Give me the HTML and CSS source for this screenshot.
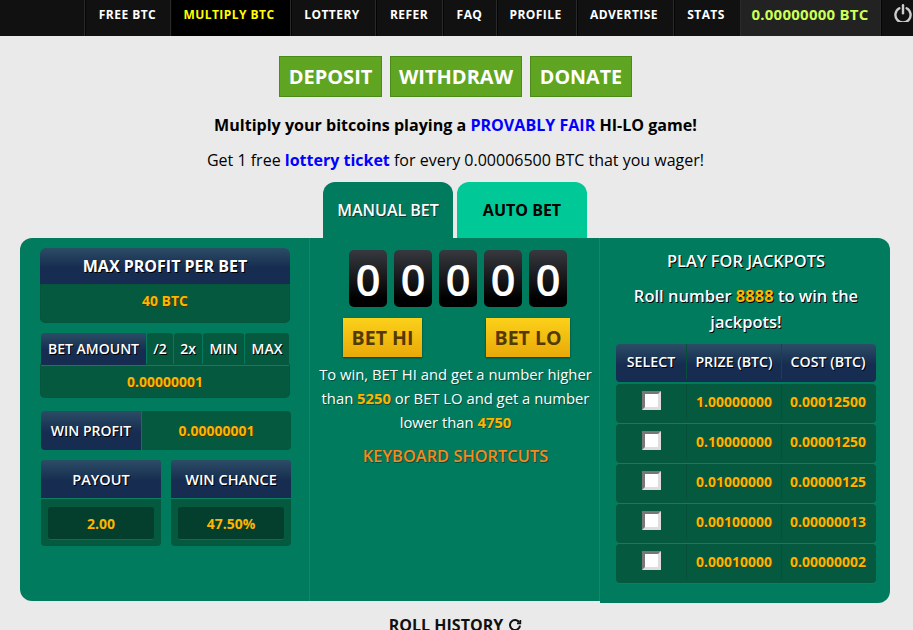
FILE: index.html
```html
<!DOCTYPE html>
<html lang="en">
<head>
<meta charset="utf-8">
<title>Multiply BTC</title>
<link rel="stylesheet" href="styles.css">
</head>
<body>
<nav class="topbar">
  <a class="nav-item nav-free">FREE BTC</a>
  <a class="nav-item nav-active nav-multiply">MULTIPLY BTC</a>
  <a class="nav-item nav-lottery">LOTTERY</a>
  <a class="nav-item nav-refer">REFER</a>
  <a class="nav-item nav-faq">FAQ</a>
  <a class="nav-item nav-profile">PROFILE</a>
  <a class="nav-item nav-advertise">ADVERTISE</a>
  <a class="nav-item nav-stats">STATS</a>
  <div class="nav-balance">0.00000000 BTC</div>
  <a class="nav-power">
    <svg width="18" height="18" viewBox="0 0 18 18" fill="none" stroke="#ccc" stroke-width="2.4" stroke-linecap="round"><path d="M5.4 4.2a7.6 7.6 0 1 0 7.2 0"/><path d="M9 1.2v8"/></svg>
  </a>
</nav>

<div class="actions">
  <a class="action-btn btn-deposit">DEPOSIT</a>
  <a class="action-btn btn-withdraw">WITHDRAW</a>
  <a class="action-btn btn-donate">DONATE</a>
</div>

<p class="intro intro-bold">Multiply your bitcoins playing a <a class="link">PROVABLY FAIR</a> HI-LO game!</p>
<p class="intro intro-second">Get 1 free <a class="link link-bold">lottery ticket</a> for every 0.00006500 BTC that you wager!</p>

<div class="tabs">
  <a class="tab tab-manual">MANUAL BET</a>
  <a class="tab tab-auto">AUTO BET</a>
</div>

<main class="game">
  <section class="col col-left">
    <div class="head head-max">MAX PROFIT PER BET</div>
    <div class="cell cell-max">40 BTC</div>

    <div class="bet-row">
      <div class="head-small bet-label">BET AMOUNT</div>
      <a class="bet-op op-half">/2</a>
      <a class="bet-op op-double">2x</a>
      <a class="bet-op op-min">MIN</a>
      <a class="bet-op op-max">MAX</a>
    </div>
    <div class="cell cell-bet">0.00000001</div>

    <div class="win-row">
      <div class="head-small win-label">WIN PROFIT</div>
      <div class="win-value">0.00000001</div>
    </div>

    <div class="stat-row">
      <div class="stat">
        <div class="stat-head">PAYOUT</div>
        <div class="stat-body"><div class="stat-value">2.00</div></div>
      </div>
      <div class="stat">
        <div class="stat-head">WIN CHANCE</div>
        <div class="stat-body"><div class="stat-value">47.50%</div></div>
      </div>
    </div>
  </section>

  <section class="col col-mid">
    <div class="digits">
      <span class="digit">0</span><span class="digit">0</span><span class="digit">0</span><span class="digit">0</span><span class="digit">0</span>
    </div>
    <div class="bet-btns">
      <a class="bet-btn bet-hi">BET HI</a>
      <a class="bet-btn bet-lo">BET LO</a>
    </div>
    <p class="rules">To win, BET HI and get a number higher than <b class="gold">5250</b> or BET LO and get a number lower than <b class="gold">4750</b></p>
    <a class="shortcuts">KEYBOARD SHORTCUTS</a>
  </section>

  <section class="col col-right">
    <h2 class="jack-title">PLAY FOR JACKPOTS</h2>
    <p class="jack-text">Roll number <span class="gold">8888</span> to win the jackpots!</p>
    <div class="jack-table">
      <div class="jack-row jack-head"><div class="jc">SELECT</div><div class="jc">PRIZE (BTC)</div><div class="jc">COST (BTC)</div></div>
      <div class="jack-row jack-body"><div class="jc"><input class="check" type="checkbox"></div><div class="jc">1.00000000</div><div class="jc">0.00012500</div></div>
      <div class="jack-row jack-body"><div class="jc"><input class="check" type="checkbox"></div><div class="jc">0.10000000</div><div class="jc">0.00001250</div></div>
      <div class="jack-row jack-body"><div class="jc"><input class="check" type="checkbox"></div><div class="jc">0.01000000</div><div class="jc">0.00000125</div></div>
      <div class="jack-row jack-body"><div class="jc"><input class="check" type="checkbox"></div><div class="jc">0.00100000</div><div class="jc">0.00000013</div></div>
      <div class="jack-row jack-body"><div class="jc"><input class="check" type="checkbox"></div><div class="jc">0.00010000</div><div class="jc">0.00000002</div></div>
    </div>
  </section>
</main>

<div class="history">ROLL HISTORY
  <svg class="history-icon" width="14" height="14" viewBox="0 0 14 14" fill="none" stroke="#111" stroke-width="2"><path d="M11.4 4.6A5 5 0 1 0 12 7.6"/><path d="M12.4 2v3.4H9" stroke-width="1.6"/></svg>
</div>
</body>
</html>
```
FILE: styles.css
```css
* { box-sizing: border-box; }
html, body { margin: 0; padding: 0; height: 630px; overflow: hidden; }
body { background: #eaeaea; color: #000; font-family: "Open Sans", "Liberation Sans", sans-serif; font-size: 16px; }
p, h2 { margin: 0; }

.topbar { display: flex; justify-content: flex-end; height: 36px; background: #111; }
.nav-item { display: flex; align-items: center; justify-content: center; height: 36px; padding-bottom: 7px; border-left: 1px solid #2a2a2a; box-shadow: inset 1px 0 0 #050505; color: #fff; font-size: 12px; font-weight: 700; letter-spacing: .45px; }
.nav-free { width: 86px; }
.nav-multiply { width: 120px; padding-right: 3px; }
.nav-lottery { width: 85px; padding-right: 2px; }
.nav-refer { width: 67px; }
.nav-faq { width: 54px; }
.nav-profile { width: 80px; padding-right: 2px; }
.nav-advertise { width: 97px; padding-right: 2px; }
.nav-stats { width: 67px; padding-right: 2px; }
.nav-active { background: #000; color: #ff0; }
.nav-balance { display: flex; align-items: center; justify-content: center; width: 140px; padding: 0 1px 9px 0; background: #222; border-left: 1px solid #2a2a2a; color: #ccff55; font-size: 15px; font-weight: 700; letter-spacing: .25px; }
.nav-power { display: flex; justify-content: flex-end; width: 33px; padding: 4px 1px 0 0; border-left: 1px solid #2a2a2a; box-shadow: inset 1px 0 0 #050505; }

.actions { display: flex; justify-content: center; gap: 8px; margin-top: 20px; padding-right: 2px; }
.action-btn { display: flex; align-items: center; justify-content: center; height: 41px; background: #5fa522; border: 1px solid #4c8a19; color: #fff; font-size: 20px; font-weight: 700; }
.btn-deposit { width: 103px; }
.btn-withdraw { width: 132px; }
.btn-donate { width: 102px; font-size: 19.7px; }

.intro { text-align: center; line-height: 22px; padding-right: 2px; }
.intro-bold { margin-top: 17px; font-weight: 700; font-size: 16.07px; }
.intro-second { margin-top: 13px; }
.link { color: #00f; font-weight: 700; }

.tabs { display: flex; justify-content: center; gap: 4px; margin-top: 11px; padding-right: 3px; }
.tab { display: flex; align-items: center; justify-content: center; width: 130px; height: 56px; border-radius: 12px 12px 0 0; font-size: 16px; font-weight: 600; }
.tab-manual { background: #007b5e; color: #fff; text-shadow: 1px 1px 0 #0b3a2e; }
.tab-auto { background: #00c896; color: #000; font-weight: 700; }

.game { display: flex; align-items: flex-start; margin: 0 23px 0 20px; color: #fff; }
.col { background: #007b5e; }
.col-left { width: 289px; height: 363px; padding: 10px 19px 0 20px; border-radius: 12px 0 0 12px; }
.col-mid { width: 291px; height: 363px; padding-top: 12px; border-left: 1px solid #0c8a6b; border-right: 1px solid #0c8a6b; text-align: center; }
.col-right { width: 290px; height: 365px; padding: 10px 14px 0 16px; border-radius: 0 12px 12px 0; text-align: center; }

.head { display: flex; align-items: center; justify-content: center; height: 37px; border-bottom: 1px solid #0c7f60; border-radius: 6px 6px 0 0; background: linear-gradient(#2c4d66, #162c50 55%); font-size: 16px; font-weight: 700; text-shadow: 1px 1px 0 #000; }
.cell { display: flex; align-items: center; justify-content: center; margin: 0 1px; background: #04593f; border-radius: 0 0 4px 4px; color: #ffb400; font-size: 14px; font-weight: 700; text-shadow: 1px 1px 0 #3a3a00; box-shadow: 0 0 0 1px #06543c; }
.cell-max { height: 37px; padding-bottom: 7px; }
.head-small { display: flex; align-items: center; justify-content: center; padding-bottom: 1px; background: linear-gradient(#2c4d66, #162c50 55%); font-size: 14px; font-weight: 600; text-shadow: 1px 1px 0 #000; }

.bet-row { display: flex; gap: 1px; height: 32px; margin: 11px 1px 0; }
.bet-label { width: 105px; border-radius: 4px 0 0 0; }
.bet-op { display: flex; align-items: center; justify-content: center; padding-bottom: 1px; background: #04593f; border-radius: 3px 3px 0 0; font-size: 14px; font-weight: 600; text-shadow: 1px 1px 0 #000; }
.op-half { width: 26px; }
.op-double { width: 28px; }
.op-min { width: 41px; }
.op-max { width: 44px; }
.cell-bet { height: 32px; margin-top: 0; border-top: 1px solid #0c7f60; }

.win-row { display: flex; height: 39px; margin: 14px -1px 0 1px; }
.win-label { width: 100px; border-radius: 4px 0 0 4px; }
.win-value { display: flex; flex: 1; align-items: center; justify-content: center; margin-left: 1px; background: #04593f; border-radius: 0 4px 4px 0; color: #ffb400; font-size: 14px; font-weight: 700; text-shadow: 1px 1px 0 #3a3a00; }

.stat-row { display: flex; gap: 10px; margin: 10px -1px 0 1px; }
.stat { width: 120px; height: 86px; border-radius: 4px; background: #04593f; overflow: hidden; }
.stat-head { display: flex; align-items: center; justify-content: center; height: 39px; border-bottom: 1px solid #0c7f60; background: linear-gradient(#2c4d66, #162c50 55%); font-size: 14.5px; font-weight: 600; text-shadow: 1px 1px 0 #000; }
.stat-body { padding: 8px 7px; }
.stat-value { display: flex; align-items: center; justify-content: center; height: 33px; border-radius: 3px; background: #033f2c; border-bottom: 1px solid #0c7050; color: #ffb400; font-size: 14px; font-weight: 700; }

.digits { display: flex; justify-content: center; gap: 7px; padding-left: 7px; }
.digit { display: flex; align-items: center; justify-content: center; width: 38px; height: 57px; border-radius: 5px; background: linear-gradient(#36393f, #000 85%); color: #fff; font-size: 44px; font-weight: 600; }

.bet-btns { display: flex; justify-content: space-between; margin: 11px 29px 0 33px; }
.bet-btn { display: flex; align-items: center; justify-content: center; height: 39px; background: linear-gradient(#fbd11a, #e9a908); box-shadow: 0 1px 2px rgba(0,0,0,.5); color: #543a00; font-size: 19.5px; font-weight: 700; }
.bet-hi { width: 79px; }
.bet-lo { width: 84px; }
.rules { margin: 5px 7px 0 9px; font-size: 14.8px; line-height: 24px; text-shadow: 1px 1px 0 #0a4d3b; }
.gold { color: #ffb400; font-weight: 700; }
.shortcuts { display: block; margin-top: 10px; padding-left: 2px; color: #f7891e; font-size: 16.4px; font-weight: 600; text-shadow: 1px 1px 0 #0a4d3b; }

.jack-title { font-size: 16.4px; line-height: 26px; font-weight: 600; text-shadow: 1px 1px 0 #000; }
.jack-text { margin-top: 9px; font-size: 16.5px; line-height: 26px; font-weight: 600; text-shadow: 1px 1px 0 #000; }
.jack-table { display: flex; flex-direction: column; gap: 1px; margin-top: 9px; }
.jack-row { display: grid; grid-template-columns: 70px 95px 95px; border-radius: 4px; }
.jack-head { height: 38px; margin-bottom: 1px; padding-bottom: 3px; background: linear-gradient(#2c4d66, #162c50 55%); font-size: 14.2px; font-weight: 600; text-shadow: 1px 1px 0 #000; }
.jack-body { height: 39px; padding-bottom: 4px; background: #04593f; box-shadow: 0 1px 0 #0c7f60; color: #ffb400; font-size: 14px; font-weight: 700; text-shadow: 1px 1px 0 #3a3a00; }
.jc { display: flex; align-items: center; justify-content: center; border-left: 1px solid #06503a; }
.jc:first-child { border-left: 0; }
.jc:last-child { padding-right: 2px; }
.check { appearance: none; width: 19px; height: 19px; margin: 0 0 2px; background: #fff; border: 3px solid; border-color: #777 #ddd #ddd #777; border-radius: 0; }

.history { display: flex; align-items: center; justify-content: center; gap: 5px; margin-top: 11px; padding-right: 2px; font-size: 16px; font-weight: 700; color: #111; }
```
